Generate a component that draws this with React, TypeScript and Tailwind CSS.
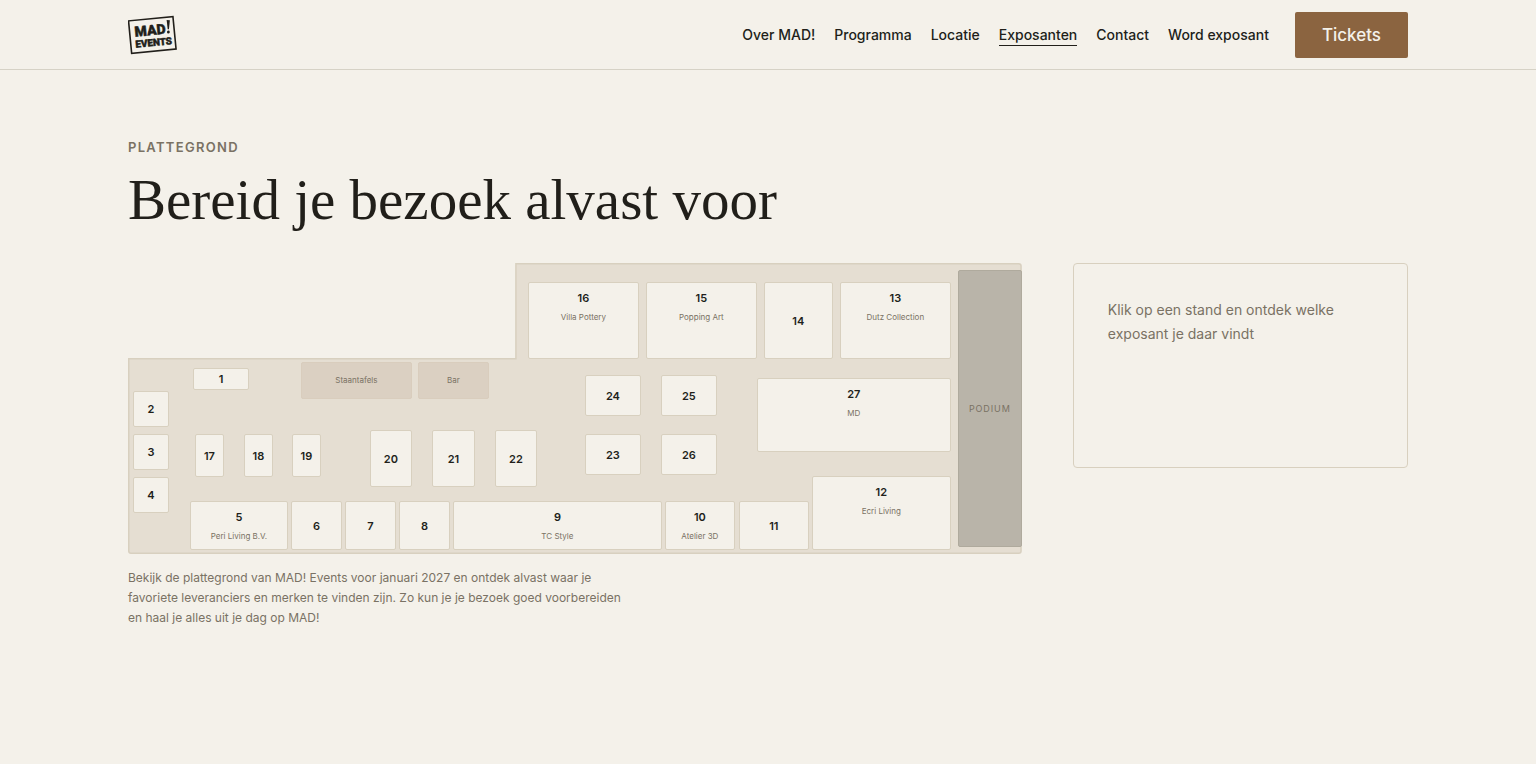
import { useState } from "react";
import clsx from "clsx";

const navItems = [
  { label: "Over MAD!", href: "#over" },
  { label: "Programma", href: "#programma" },
  { label: "Locatie", href: "#locatie" },
  { label: "Exposanten", href: "#exposanten", active: true },
  { label: "Contact", href: "#contact" },
  { label: "Word exposant", href: "#word-exposant" },
];

type Box = { x: number; y: number; w: number; h: number };
type Stand = Box & { nr: number; name?: string };

// Plan units, the hall is 894 x 291
const PLAN_W = 894;
const PLAN_H = 291;

const stands: Stand[] = [
  { nr: 1, x: 65, y: 105, w: 56, h: 22 },
  { nr: 2, x: 5, y: 128, w: 36, h: 36 },
  { nr: 3, x: 5, y: 171, w: 36, h: 36 },
  { nr: 4, x: 5, y: 214, w: 36, h: 36 },
  { nr: 5, x: 62, y: 238, w: 98, h: 49, name: "Peri Living B.V." },
  { nr: 6, x: 163, y: 238, w: 51, h: 49 },
  { nr: 7, x: 217, y: 238, w: 51, h: 49 },
  { nr: 8, x: 271, y: 238, w: 51, h: 49 },
  { nr: 9, x: 325, y: 238, w: 209, h: 49, name: "TC Style" },
  { nr: 10, x: 537, y: 238, w: 70, h: 49, name: "Atelier 3D" },
  { nr: 11, x: 611, y: 238, w: 70, h: 49 },
  { nr: 12, x: 684, y: 213, w: 139, h: 74, name: "Ecri Living" },
  { nr: 13, x: 712, y: 19, w: 111, h: 77, name: "Dutz Collection" },
  { nr: 14, x: 636, y: 19, w: 69, h: 77 },
  { nr: 15, x: 518, y: 19, w: 111, h: 77, name: "Popping Art" },
  { nr: 16, x: 400, y: 19, w: 111, h: 77, name: "Villa Pottery" },
  { nr: 17, x: 67, y: 171, w: 29, h: 43 },
  { nr: 18, x: 116, y: 171, w: 29, h: 43 },
  { nr: 19, x: 164, y: 171, w: 29, h: 43 },
  { nr: 20, x: 242, y: 167, w: 42, h: 57 },
  { nr: 21, x: 304, y: 167, w: 43, h: 57 },
  { nr: 22, x: 367, y: 167, w: 42, h: 57 },
  { nr: 23, x: 457, y: 171, w: 56, h: 41 },
  { nr: 24, x: 457, y: 112, w: 56, h: 41 },
  { nr: 25, x: 533, y: 112, w: 56, h: 41 },
  { nr: 26, x: 533, y: 171, w: 56, h: 41 },
  { nr: 27, x: 629, y: 115, w: 194, h: 74, name: "MD" },
];

const facilities = [
  { label: "Staantafels", x: 173, y: 99, w: 111, h: 37 },
  { label: "Bar", x: 290, y: 99, w: 71, h: 37 },
];

const podium = { x: 830, y: 7, w: 64, h: 277 };

function place({ x, y, w, h }: Box) {
  return {
    left: `${(x / PLAN_W) * 100}%`,
    top: `${(y / PLAN_H) * 100}%`,
    width: `${(w / PLAN_W) * 100}%`,
    height: `${(h / PLAN_H) * 100}%`,
  };
}

function Logo() {
  return (
    <svg viewBox="0 0 50 40" className="h-10 w-[50px]" role="img" aria-label="MAD! Events">
      <g transform="rotate(-5.5 25 20)" fill="#211f1a">
        <rect x="2" y="3.6" width="44.6" height="32.6" fill="none" stroke="#211f1a" strokeWidth="1.6" />
        <g fontFamily="Roboto, sans-serif" fontWeight="900" stroke="#211f1a" strokeWidth="0.5">
          <text x="7" y="20" fontSize="14">MAD</text>
          <text x="6.6" y="31" fontSize="9.9">EVENTS</text>
        </g>
        <path d="M40 6.4 L43.2 6.9 L41.4 15.8 L40.2 15.8 Z" />
        <circle cx="40.6" cy="18.5" r="1.4" />
      </g>
    </svg>
  );
}

function Header() {
  return (
    <header className="border-b border-[#d6d2c6]">
      <div className="mx-auto flex max-w-7xl items-center justify-between pt-3 pb-[11px]">
        <a href="#home">
          <Logo />
        </a>
        <div className="flex items-center gap-[26px]">
          <nav className="flex items-center gap-[19px]">
            {navItems.map((item) => (
              <a
                key={item.label}
                href={item.href}
                className={clsx(
                  "border-b text-sm leading-5 font-medium",
                  item.active ? "border-[#211f1a]" : "border-transparent"
                )}
              >
                {item.label}
              </a>
            ))}
          </nav>
          <a
            href="#tickets"
            className="rounded-xs bg-[#8b6440] px-[27px] py-[9px] text-[17px] leading-7 font-medium text-[#f4f1ea]"
          >
            Tickets
          </a>
        </div>
      </div>
    </header>
  );
}

function FloorPlan({ onSelect }: { onSelect: (stand: Stand) => void }) {
  return (
    <div className="relative aspect-[894/291] w-full">
      <svg viewBox="0 0 894 291" className="block h-full w-full" aria-hidden="true">
        <path
          d="M388 0.75 H891 Q893.25 0.75 893.25 3 V288 Q893.25 290.25 891 290.25 H3 Q0.75 290.25 0.75 288 V95.75 H388 Z"
          fill="#e5ded2"
          stroke="#d8d0bf"
          strokeWidth="1.5"
        />
      </svg>

      {facilities.map((item) => (
        <div
          key={item.label}
          style={place(item)}
          className="absolute flex items-center justify-center rounded-xs border border-[#d9cdbd] bg-[#dbd0c2] text-[8px] text-[#7a7264]"
        >
          {item.label}
        </div>
      ))}

      <div
        style={place(podium)}
        className="absolute flex items-center justify-center rounded-xs border border-[#afaa9d] bg-[#b9b4a9] text-[9px] tracking-widest text-[#7a7264]"
      >
        PODIUM
      </div>

      {stands.map((stand) => (
        <button
          key={stand.nr}
          type="button"
          onClick={() => onSelect(stand)}
          style={place(stand)}
          className={clsx(
            "absolute flex cursor-pointer flex-col items-center rounded-xs border border-[#d8d0bf] bg-[#f4f1ea]",
            stand.name ? "justify-start gap-[5px] pt-[7px]" : "justify-center pt-px"
          )}
        >
          <span className="text-[11px] leading-4 font-semibold">{stand.nr}</span>
          {stand.name && (
            <span className="text-[8px] leading-3 whitespace-nowrap text-[#7a7264]">{stand.name}</span>
          )}
        </button>
      ))}
    </div>
  );
}

export default function App() {
  const [selected, setSelected] = useState<Stand | null>(null);

  return (
    <div className="min-h-screen bg-[#f4f1ea] font-['Inter',sans-serif] text-[#211f1a]">
      <Header />
      <main className="mx-auto max-w-7xl pt-[67px] pb-32">
        <p className="text-[13px] leading-5 font-semibold tracking-widest text-[#7a7264] uppercase">
          Plattegrond
        </p>
        <h1 className="mt-[9px] font-['Liberation_Serif',serif] text-[57px] leading-[68px]">
          Bereid je bezoek alvast voor
        </h1>

        <div className="mt-[29px] grid grid-cols-[8fr_3fr] items-start gap-[51px]">
          <div>
            <FloorPlan onSelect={setSelected} />
            <p className="mt-[14px] max-w-[500px] text-xs leading-5 text-[#7a7264]">
              Bekijk de plattegrond van MAD! Events voor januari 2027 en ontdek alvast waar je
              favoriete leveranciers en merken te vinden zijn. Zo kun je je bezoek goed voorbereiden
              en haal je alles uit je dag op MAD!
            </p>
          </div>

          <aside className="min-h-[205px] rounded-sm border border-[#d8d0bf] p-[34px]">
            <p className="text-sm leading-6 text-[#7a7264]">
              {selected
                ? selected.name ?? selected.nr
                : "Klik op een stand en ontdek welke exposant je daar vindt"}
            </p>
          </aside>
        </div>
      </main>
    </div>
  );
}
